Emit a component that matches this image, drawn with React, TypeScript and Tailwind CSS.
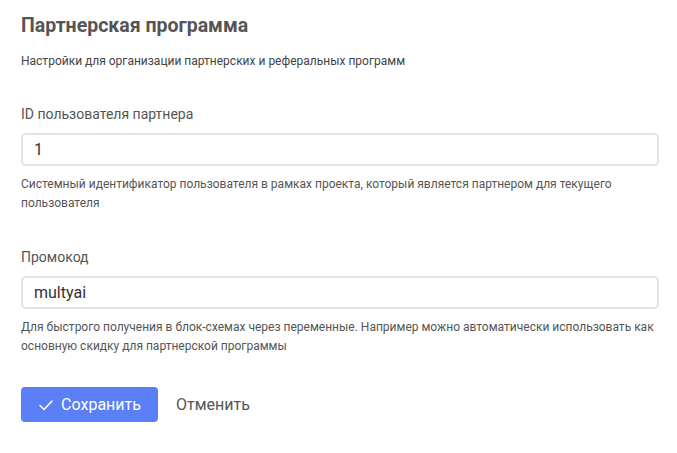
import React from 'react';

const Field: React.FC<{ label: string; value: string; hint: string }> = ({ label, value, hint }) => (
  <div className="flex flex-col">
    <label className="text-[14px] leading-[20px] text-[#555]">{label}</label>
    <input
      readOnly
      value={value}
      className="mt-[9px] h-[33px] w-full rounded-[5px] border-2 border-[#e3e3e3] bg-white px-[11px] text-[16px] text-[#333] outline-none"
    />
    <p className="mt-[9px] text-[12px] leading-[18.5px] text-[#555]">{hint}</p>
  </div>
);

export default function App() {
  return (
    <div className="min-h-screen bg-white pl-[21px] pr-[18px] pt-[12px] font-['Roboto',sans-serif]">
      <h1 className="text-[19.5px] font-bold leading-[28px] text-[#555]">Партнерская программа</h1>
      <p className="mt-[13px] text-[12px] leading-[16px] text-[#444]">
        Настройки для организации партнерских и реферальных программ
      </p>

      <div className="mt-[35px] flex flex-col gap-[35px]">
        <Field
          label="ID пользователя партнера"
          value="1"
          hint="Системный идентификатор пользователя в рамках проекта, который является партнером для текущего пользователя"
        />
        <Field
          label="Промокод"
          value="multyai"
          hint="Для быстрого получения в блок-схемах через переменные. Например можно автоматически использовать как основную скидку для партнерской программы"
        />
      </div>

      <div className="mt-[32px] flex items-center gap-[18px]">
        <button className="flex h-[35px] w-[137px] items-center justify-center gap-[7px] rounded-[4px] bg-[#5b7ff6] text-[16px] text-white">
          <svg width="16" height="16" viewBox="0 0 16 16" fill="none" stroke="white" strokeWidth="1.6" strokeLinecap="round" strokeLinejoin="round">
            <path d="M2 8.5l4 4L14 4" />
          </svg>
          Сохранить
        </button>
        <button className="text-[16px] text-[#555]">Отменить</button>
      </div>
    </div>
  );
}
